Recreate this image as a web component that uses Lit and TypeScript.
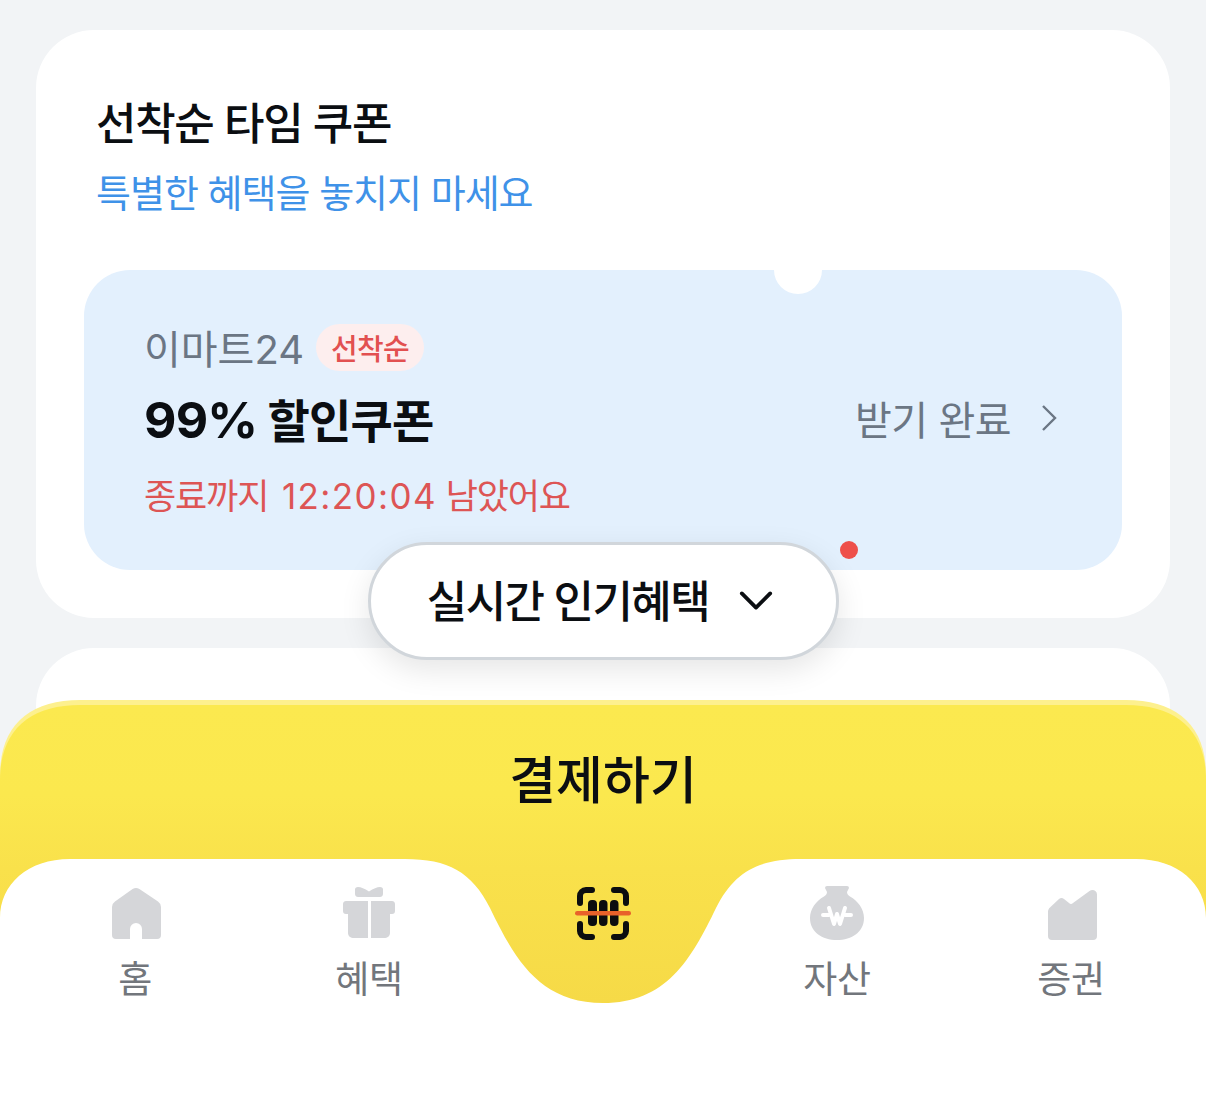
import { LitElement, html, css, svg } from "lit";
import { customElement } from "lit/decorators.js";

const homeIcon = svg`<path d="M25.6 3.1a6 6 0 0 1 6.800 0L51 15.400a7 7 0 0 1 3 5.600V49a4 4 0 0 1-4 4H35V43a6 6 0 0 0-12 0V53H9a4 4 0 0 1-4-4V21a7 7 0 0 1 3-5.600z"/>`;
const giftIcon = svg`
  <path d="M14 3.500C14 2 15 1 17 1c3 0 6.500 1.500 11 4.500C32.500 2.500 36 1 39 1c2 0 3 1 3 2.500V8c0 2-1.500 3-3 3H17c-1.500 0-3-1-3-3z"/>
  <path d="M5 15h22v37H13c-3.500 0-6-2-6-5V28H5c-2 0-3-1-3-3v-7c0-2 1.500-3 3-3z"/>
  <path d="M51 15H30v37h13c3.500 0 6-2 6-5V28h2c2 0 3-1 3-3v-7c0-2-1.500-3-3-3z"/>`;
const bagIcon = svg`
  <path d="M16 2a2 2 0 0 1 2-2h20a2 2 0 0 1 2 2l-2 4c0 2 1 3 3 4.500C49 15 55 23 55 32c0 14-12 22-27 22S1 46 1 32c0-9 6-17 14-21.500 2-1.500 3-2.500 3-4.500z"/>
  <g fill="none" stroke="#fff" stroke-width="4" stroke-linecap="round" stroke-linejoin="round">
    <path d="M14 29h6M36 29h6"/>
    <path d="M20 22l5 16 3-10 3 10 5-16"/>
  </g>`;
const factoryIcon = svg`<path d="M5 26c0-2 .8-3.500 2-4.500L16 13a4 4 0 0 1 5 0l5 4a3 3 0 0 0 4 0L46.500 5C49.500 3 54 4.500 54 8.500V50a4 4 0 0 1-4 4H9a4 4 0 0 1-4-4z"/>`;
const scanIcon = svg`
  <g fill="none" stroke="#0b0d0f" stroke-width="6" stroke-linecap="round">
    <path d="M17 4H11a6 6 0 0 0-6 6v7"/>
    <path d="M39 4h6a6 6 0 0 1 6 6v7"/>
    <path d="M17 51H11a6 6 0 0 1-6-6v-7"/>
    <path d="M39 51h6a6 6 0 0 0 6-6v-7"/>
  </g>
  <g fill="#0b0d0f">
    <rect x="13" y="14" width="9" height="26" rx="4"/>
    <rect x="24" y="14" width="8.500" height="26" rx="4"/>
    <rect x="35" y="14" width="8.500" height="26" rx="4"/>
  </g>
  <rect x="0" y="25" width="56" height="4.500" rx="2.200" fill="#e8622a"/>`;

const tabs: [string, unknown][] = [
  ["홈", homeIcon],
  ["혜택", giftIcon],
  ["", scanIcon],
  ["자산", bagIcon],
  ["증권", factoryIcon],
];

@customElement("app-root")
export class AppRoot extends LitElement {
  static styles = css`
    :host {
      display: block;
      position: relative;
      width: 1206px;
      height: 1108px;
      overflow: hidden;
      background: #f2f4f6;
      font-family: Inter, "Noto Sans CJK KR", sans-serif;
      color: #0b0e12;
    }
    .content {
      display: flex;
      flex-direction: column;
      gap: 30px;
      padding: 30px 36px 0;
    }
    .card {
      background: #fff;
      border-radius: 58px;
    }
    .timecard {
      height: 588px;
      box-sizing: border-box;
      padding: 66px 48px 0;
    }
    .second {
      height: 300px;
    }
    .title {
      margin: 0 0 0 12px;
      font-size: 44px;
      line-height: 56px;
      font-weight: 500;
      letter-spacing: -1.3px;
    }
    .subtitle {
      margin: 16px 0 0 12px;
      font-size: 38px;
      line-height: 50px;
      color: #3f92e8;
      letter-spacing: -1px;
    }
    .coupon {
      position: relative;
      margin-top: 52px;
      height: 300px;
      box-sizing: border-box;
      padding: 52px 65px 0 60px;
      background: #e3f0fd;
      border-radius: 46px;
      overflow: hidden;
    }
    .notch {
      position: absolute;
      top: -24px;
      left: 690px;
      width: 48px;
      height: 48px;
      border-radius: 50%;
      background: #fff;
    }
    .brand {
      display: flex;
      align-items: center;
      gap: 12px;
      height: 50px;
      font-size: 40px;
      color: #6b7684;
      letter-spacing: 0;
    }
    .badge {
      display: flex;
      align-items: center;
      justify-content: center;
      width: 108px;
      height: 47px;
      border-radius: 24px;
      background: #fdeeee;
      color: #e25050;
      font-size: 29px;
      font-weight: 500;
      letter-spacing: -0.6px;
    }
    .main {
      display: flex;
      align-items: center;
      justify-content: space-between;
      margin-top: 21px;
      height: 50px;
    }
    .discount {
      font-size: 46px;
      font-weight: 700;
      letter-spacing: -0.8px;
    }
    .discount b {
      font-size: 50px;
      font-weight: 700;
    }
    .action {
      display: flex;
      align-items: center;
      gap: 30px;
      font-size: 40px;
      color: #6b7684;
      letter-spacing: -0.5px;
    }
    .action svg {
      display: block;
      width: 16px;
      height: 28px;
    }
    .timer {
      margin-top: 31px;
      font-size: 35px;
      line-height: 44px;
      color: #dd5555;
      letter-spacing: -1.15px;
    }
    .timer b {
      margin-left: 5px;
      font-weight: 400;
      letter-spacing: 1.4px;
    }
    .pill {
      position: absolute;
      left: 368px;
      top: 542px;
      width: 471px;
      height: 118px;
      box-sizing: border-box;
      display: flex;
      align-items: center;
      justify-content: center;
      gap: 30px;
      padding-right: 7px;
      background: #fff;
      border: 3px solid #d1d6db;
      border-radius: 59px;
      box-shadow: 0 10px 30px rgba(0, 0, 0, 0.1);
      font-size: 44px;
      font-weight: 500;
      letter-spacing: -1.6px;
    }
    .pill span {
      margin-bottom: 5px;
    }
    .pill svg {
      display: block;
      width: 34px;
      height: 22px;
    }
    .dot {
      position: absolute;
      left: 840px;
      top: 541px;
      width: 18px;
      height: 18px;
      border-radius: 50%;
      background: #ee4f4a;
    }
    .dock {
      position: absolute;
      left: 0;
      right: 0;
      top: 700px;
      bottom: 0;
    }
    .shape {
      position: absolute;
      inset: 0;
      display: block;
      width: 100%;
      height: 100%;
    }
    .pay {
      position: relative;
      height: 159px;
      box-sizing: border-box;
      padding-top: 48px;
      text-align: center;
      font-size: 51px;
      line-height: 66px;
      font-weight: 500;
      letter-spacing: 0;
    }
    .tabs {
      position: relative;
      display: grid;
      grid-template-columns: repeat(5, 1fr);
      padding: 27px 18px 0;
    }
    .tab {
      display: flex;
      flex-direction: column;
      align-items: center;
      gap: 15px;
      font-size: 37px;
      line-height: 46px;
      color: #72767c;
      letter-spacing: -0.4px;
    }
    .tab svg {
      display: block;
      width: 56px;
      height: 56px;
      fill: #d5d6d9;
    }
  `;

  render() {
    return html`
      <div class="content">
        <section class="card timecard">
          <h2 class="title">선착순 타임 쿠폰</h2>
          <p class="subtitle">특별한 혜택을 놓치지 마세요</p>
          <div class="coupon">
            <span class="notch"></span>
            <div class="brand">이마트24 <span class="badge">선착순</span></div>
            <div class="main">
              <span class="discount"><b>99%</b> 할인쿠폰</span>
              <span class="action">받기 완료
                <svg viewBox="0 0 16 28"><path d="M2 2l12 12L2 26" fill="none" stroke="#6b7684" stroke-width="2.400"/></svg>
              </span>
            </div>
            <div class="timer">종료까지 <b>12:20:04</b> 남았어요</div>
          </div>
        </section>
        <section class="card second"></section>
      </div>

      <div class="pill"><span>실시간 인기혜택</span>
        <svg viewBox="0 0 36 22"><path d="M3 3l15 15L33 3" fill="none" stroke="#0b0e12" stroke-width="4" stroke-linecap="round" stroke-linejoin="round"/></svg>
      </div>
      <span class="dot"></span>

      <div class="dock">
        <svg class="shape" viewBox="0 700 1206 408">
          <defs>
            <linearGradient id="y" x1="0" y1="705" x2="0" y2="1003" gradientUnits="userSpaceOnUse">
              <stop offset="0" stop-color="#fbe94f"/>
              <stop offset="0.3" stop-color="#fbe84e"/>
              <stop offset="0.55" stop-color="#f9e14b"/>
              <stop offset="1" stop-color="#f6da47"/>
            </linearGradient>
          </defs>
          <path fill="#fdf08e" d="M0 1108V775C0 725 30 700 80 700H1126C1176 700 1206 725 1206 775V1108Z"/>
          <path fill="url(#y)" d="M0 1108V780C0 730 30 705 80 705H1126C1176 705 1206 730 1206 780V1108Z"/>
          <path fill="#fff" d="M0 1108V918C0 884 28 859 70 859H405C448 859 472 872 490 908C515 960 540 1003 603 1003C666 1003 691 960 716 908C734 872 758 859 801 859H1136C1178 859 1206 884 1206 918V1108Z"/>
        </svg>
        <div class="pay">결제하기</div>
        <nav class="tabs">
          ${tabs.map(
            ([label, icon]) => html`
              <div class="tab">
                <svg viewBox="0 0 56 56">${icon}</svg>
                ${label ? html`<span>${label}</span>` : ""}
              </div>
            `
          )}
        </nav>
      </div>
    `;
  }
}
